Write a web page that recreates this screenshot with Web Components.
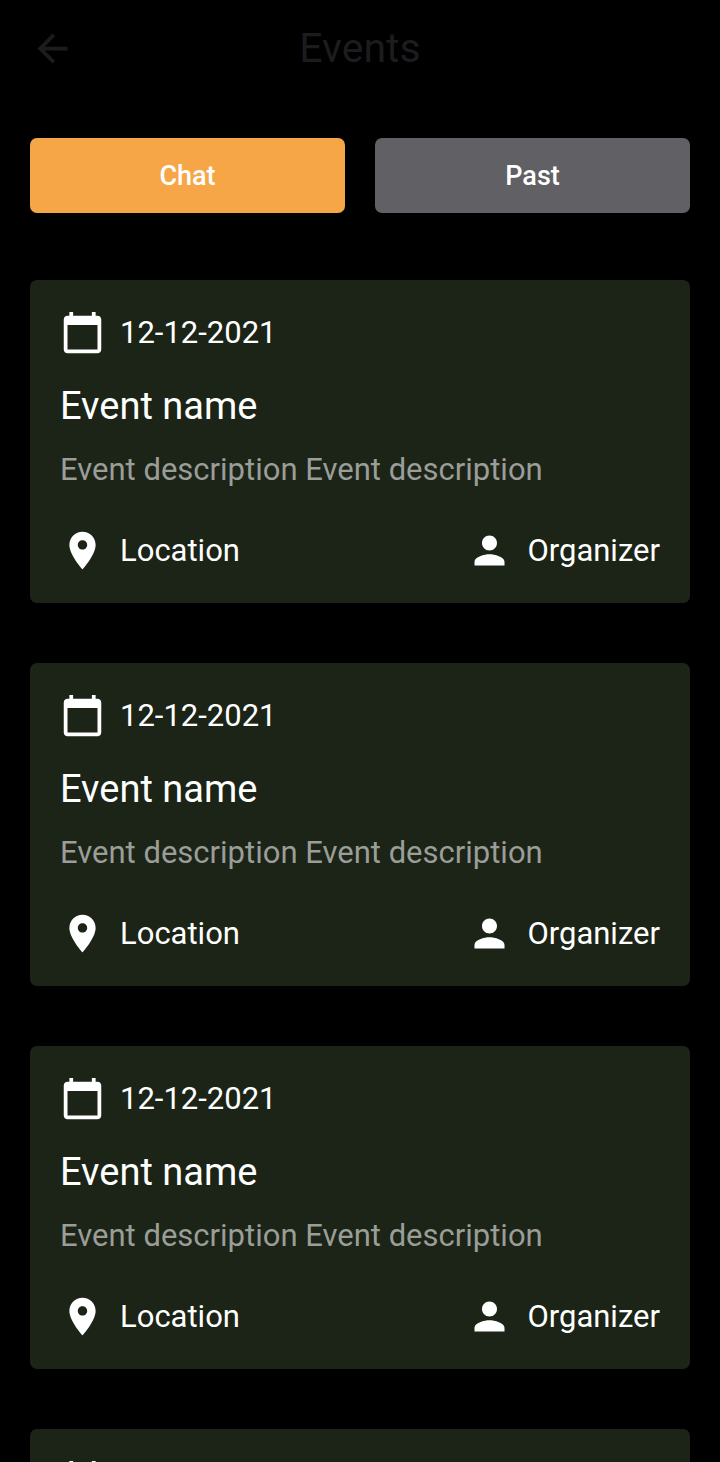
<!DOCTYPE html>
<html lang="en">
<head>
<meta charset="utf-8">
<meta name="viewport" content="width=device-width, initial-scale=1">
<title>Events</title>
<style>
    body {
        margin: 0;
        background: #000;
        color: #fff;
        font-family: Roboto, "Liberation Sans", sans-serif;
    }
</style>
</head>
<body>
<events-page></events-page>

<script>
"use strict";

const ICONS = {
    back: "M20 11H7.83l5.59-5.59L12 4l-8 8 8 8 1.41-1.41L7.83 13H20v-2z",
    calendar: "M20 3h-1V1h-2v2H7V1H5v2H4c-1.1 0-2 .9-2 2v16c0 1.1.9 2 2 2h16c1.1 0 2-.9 2-2V5c0-1.1-.9-2-2-2zm0 18H4V8h16v13z",
    place: "M12 2C8.13 2 5 5.13 5 9c0 5.25 7 13 7 13s7-7.75 7-13c0-3.87-3.13-7-7-7zm0 9.5c-1.38 0-2.5-1.12-2.5-2.5s1.12-2.5 2.5-2.5 2.5 1.12 2.5 2.5-1.12 2.5-2.5 2.5z",
    person: "M12 12c2.21 0 4-1.79 4-4s-1.79-4-4-4-4 1.79-4 4 1.79 4 4 4zm0 2c-2.67 0-8 1.34-8 4v2h16v-2c0-2.66-5.33-4-8-4z"
};

class AppIcon extends HTMLElement {
    connectedCallback() {
        const root = this.attachShadow({mode: "open"});
        root.innerHTML = `
            <style>
                :host {display: block; flex: none; width: 45px; height: 45px;}
                svg {display: block; width: 100%; height: 100%; fill: currentColor;}
            </style>
            <svg viewBox="0 0 24 24" aria-hidden="true"><path d="${ICONS[this.getAttribute("name")]}"/></svg>
        `;
    }
}
customElements.define("app-icon", AppIcon);

const headerTemplate = document.createElement("template");
headerTemplate.innerHTML = `
    <style>
        :host {
            display: grid;
            grid-template-columns: 1fr auto 1fr;
            align-items: center;
            height: 96px;
            padding: 0 30px;
            color: #1c1c1e;
        }
        button {
            justify-self: start;
            padding: 0;
            border: 0;
            background: none;
            color: inherit;
            cursor: pointer;
        }
        h1 {margin: 0; font-size: 41px; font-weight: 400; line-height: 48px;}
    </style>
    <button type="button" aria-label="Back"><app-icon name="back"></app-icon></button>
    <h1><slot></slot></h1>
`;

class AppHeader extends HTMLElement {
    constructor() {
        super();
        this.attachShadow({mode: "open"}).appendChild(headerTemplate.content.cloneNode(true));
    }
}
customElements.define("app-header", AppHeader);

const buttonTemplate = document.createElement("template");
buttonTemplate.innerHTML = `
    <style>
        :host {display: block; flex: 1;}
        button {
            display: block;
            width: 100%;
            height: 75px;
            padding: 0;
            border: 0;
            border-radius: 7px;
            background: #616065;
            color: #fff;
            font: 500 27px/30px Roboto, "Liberation Sans", sans-serif;
            cursor: pointer;
        }
        :host([active]) button {background: #f7a647;}
    </style>
    <button type="button"><slot></slot></button>
`;

class TabButton extends HTMLElement {
    constructor() {
        super();
        this.attachShadow({mode: "open"}).appendChild(buttonTemplate.content.cloneNode(true));
    }
}
customElements.define("tab-button", TabButton);

const cardTemplate = document.createElement("template");
cardTemplate.innerHTML = `
    <style>
        :host {
            display: block;
            flex: none;
            padding: 30px;
            border-radius: 7px;
            background: #1b2416;
            font-size: 31px;
            line-height: 44px;
        }
        .row, .item {display: flex; align-items: center;}
        .row {justify-content: space-between;}
        .item {gap: 15px;}
        h2 {margin: 29px 0 20px; font-size: 38px; font-weight: 400; line-height: 44px;}
        p {margin: 0 0 36px; color: #9a9d98;}
    </style>
    <div class="item"><app-icon name="calendar"></app-icon><slot name="date"></slot></div>
    <h2><slot name="name"></slot></h2>
    <p><slot name="description"></slot></p>
    <div class="row">
        <div class="item"><app-icon name="place"></app-icon><slot name="location"></slot></div>
        <div class="item"><app-icon name="person"></app-icon><slot name="organizer"></slot></div>
    </div>
`;

class EventCard extends HTMLElement {
    constructor() {
        super();
        this.attachShadow({mode: "open"}).appendChild(cardTemplate.content.cloneNode(true));
    }
}
customElements.define("event-card", EventCard);

class EventsPage extends HTMLElement {
    constructor() {
        super();
        this.attachShadow({mode: "open"});
        this.state = {
            tab: "Chat",
            events: Array.from({length: 4}, () => ({
                date: "12-12-2021",
                name: "Event name",
                description: "Event description Event description",
                location: "Location",
                organizer: "Organizer"
            }))
        };
    }

    connectedCallback() {
        this.render();
        this.attachEventListener();
    }

    attachEventListener() {
        const tabs = this.shadowRoot.querySelectorAll("tab-button");
        tabs.forEach((tab) => {
            tab.addEventListener("click", () => {
                tabs.forEach((t) => t.toggleAttribute("active", t === tab));
            });
        });
    }

    render() {
        const tabs = ["Chat", "Past"].map((name) =>
            `<tab-button ${name === this.state.tab ? "active" : ""}>${name}</tab-button>`
        ).join("");
        const cards = this.state.events.map((event) => `
            <event-card>
                ${Object.keys(event).map((key) => `<span slot="${key}">${event[key]}</span>`).join("")}
            </event-card>
        `).join("");
        this.shadowRoot.innerHTML = `
            <style>
                :host {display: flex; flex-direction: column; height: 100vh;}
                nav {display: flex; gap: 30px; padding: 42px 30px 67px;}
                main {
                    display: flex;
                    flex: 1;
                    flex-direction: column;
                    gap: 60px;
                    min-height: 0;
                    padding: 0 30px;
                    overflow-y: auto;
                    scrollbar-width: none;
                }
            </style>
            <app-header>Events</app-header>
            <nav>${tabs}</nav>
            <main>${cards}</main>
        `;
    }
}
customElements.define("events-page", EventsPage);
</script>
</body>
</html>
